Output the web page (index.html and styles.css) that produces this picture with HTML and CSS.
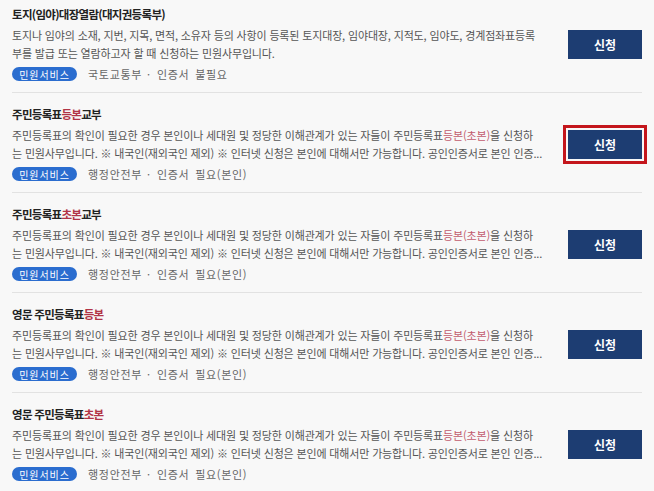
FILE: index.html
```html
<!DOCTYPE html>
<html lang="ko">
<head>
<meta charset="utf-8">
<title>민원서비스 목록</title>
<link rel="stylesheet" href="styles.css">
</head>
<body>
<ul class="list">
  <li class="item">
    <div class="info">
      <h3 class="title">토지(임야)대장열람(대지권등록부)</h3>
      <p class="desc">토지나 임야의 소재, 지번, 지목, 면적, 소유자 등의 사항이 등록된 토지대장, 임야대장, 지적도, 임야도, 경계점좌표등록<br>부를 발급 또는 열람하고자 할 때 신청하는 민원사무입니다.</p>
      <div class="meta"><span class="badge">민원서비스</span><span class="org">국토교통부</span><span class="dot">·</span><span class="cert">인증서 불필요</span></div>
    </div>
    <button class="apply" type="button">신청</button>
  </li>
  <li class="item">
    <div class="info">
      <h3 class="title">주민등록표<em class="hl">등본</em>교부</h3>
      <p class="desc">주민등록표의 확인이 필요한 경우 본인이나 세대원 및 정당한 이해관계가 있는 자들이 주민등록표<em class="hl2">등본(초본)</em>을 신청하<br>는 민원사무입니다. ※ 내국인(재외국인 제외) ※ 인터넷 신청은 본인에 대해서만 가능합니다. 공인인증서로 본인 인증...</p>
      <div class="meta"><span class="badge">민원서비스</span><span class="org">행정안전부</span><span class="dot">·</span><span class="cert">인증서 필요(본인)</span></div>
    </div>
    <button class="apply selected" type="button">신청</button>
  </li>
  <li class="item">
    <div class="info">
      <h3 class="title">주민등록표<em class="hl">초본</em>교부</h3>
      <p class="desc">주민등록표의 확인이 필요한 경우 본인이나 세대원 및 정당한 이해관계가 있는 자들이 주민등록표<em class="hl2">등본(초본)</em>을 신청하<br>는 민원사무입니다. ※ 내국인(재외국인 제외) ※ 인터넷 신청은 본인에 대해서만 가능합니다. 공인인증서로 본인 인증...</p>
      <div class="meta"><span class="badge">민원서비스</span><span class="org">행정안전부</span><span class="dot">·</span><span class="cert">인증서 필요(본인)</span></div>
    </div>
    <button class="apply" type="button">신청</button>
  </li>
  <li class="item">
    <div class="info">
      <h3 class="title">영문 주민등록표<em class="hl">등본</em></h3>
      <p class="desc">주민등록표의 확인이 필요한 경우 본인이나 세대원 및 정당한 이해관계가 있는 자들이 주민등록표<em class="hl2">등본(초본)</em>을 신청하<br>는 민원사무입니다. ※ 내국인(재외국인 제외) ※ 인터넷 신청은 본인에 대해서만 가능합니다. 공인인증서로 본인 인증...</p>
      <div class="meta"><span class="badge">민원서비스</span><span class="org">행정안전부</span><span class="dot">·</span><span class="cert">인증서 필요(본인)</span></div>
    </div>
    <button class="apply" type="button">신청</button>
  </li>
  <li class="item">
    <div class="info">
      <h3 class="title">영문 주민등록표<em class="hl">초본</em></h3>
      <p class="desc">주민등록표의 확인이 필요한 경우 본인이나 세대원 및 정당한 이해관계가 있는 자들이 주민등록표<em class="hl2">등본(초본)</em>을 신청하<br>는 민원사무입니다. ※ 내국인(재외국인 제외) ※ 인터넷 신청은 본인에 대해서만 가능합니다. 공인인증서로 본인 인증...</p>
      <div class="meta"><span class="badge">민원서비스</span><span class="org">행정안전부</span><span class="dot">·</span><span class="cert">인증서 필요(본인)</span></div>
    </div>
    <button class="apply" type="button">신청</button>
  </li>
</ul>
</body>
</html>
```
FILE: styles.css
```css
html, body {
  margin: 0;
  padding: 0;
  background: #f8f8f8;
}
body {
  font-family: "Noto Sans CJK KR", "Noto Sans", sans-serif;
  color: #333;
  overflow: hidden;
}
.list {
  list-style: none;
  margin: -8px 12px 0 12px;
  padding: 0;
}
.item {
  display: flex;
  align-items: center;
  border-top: 1px solid #e2e2e2;
  padding: 11px 0 8px 0;
}
.info {
  flex: 1;
  min-width: 0;
}
.title {
  margin: 0;
  font-size: 11.5px;
  font-weight: 700;
  line-height: 20px;
  letter-spacing: -0.7px;
  color: #222;
}
.hl {
  font-style: normal;
  color: #b13447;
}
.desc {
  margin: 2px 0 0 0;
  font-size: 11px;
  line-height: 18px;
  letter-spacing: -0.15px;
  color: #555;
  white-space: nowrap;
}
.hl2 {
  font-style: normal;
  color: #c25b6e;
}
.meta {
  margin-top: 2px;
  display: flex;
  align-items: center;
  height: 20px;
  font-size: 11px;
  color: #666;
  letter-spacing: 0.7px;
  word-spacing: 2px;
}
.badge {
  display: inline-flex;
  align-items: center;
  justify-content: center;
  height: 14px;
  width: 65px;
  border-radius: 7px;
  background: #2b6dcf;
  color: #fff;
  font-size: 10px;
  letter-spacing: 0.9px;
  word-spacing: 0;
  margin-right: 11px;
}
.dot {
  margin: 0 6px 0 5px;
}
.apply {
  flex: none;
  width: 74px;
  height: 29px;
  margin-left: 10px;
  border: 0;
  background: #1d3d72;
  color: #fff;
  font-family: inherit;
  font-size: 12px;
  font-weight: 700;
  letter-spacing: 0;
  padding: 0;
  cursor: pointer;
}
.apply.selected {
  outline: 3px solid #c4161c;
  outline-offset: 2px;
}
```
